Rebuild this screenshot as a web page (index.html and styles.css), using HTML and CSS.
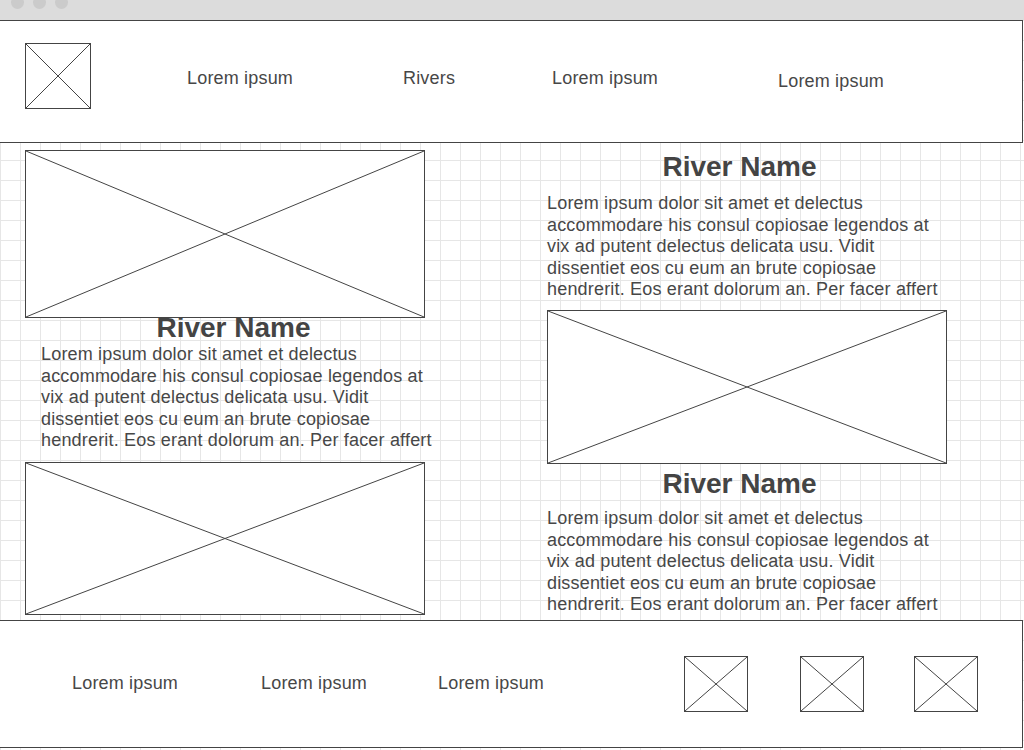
FILE: index.html
```html
<!DOCTYPE html>
<html lang="en">
  <head>
    <meta charset="UTF-8" />
    <meta name="viewport" content="width=device-width, initial-scale=1.0" />
    <title>Rivers</title>
    <link rel="stylesheet" href="styles.css">
  </head>
  <body>
    <div class="window-bar">
      <span class="dot"></span>
      <span class="dot"></span>
      <span class="dot"></span>
    </div>

    <header class="site-header">
      <div class="placeholder logo">
        <svg viewBox="0 0 100 100" preserveAspectRatio="none">
          <line x1="0" y1="0" x2="100" y2="100" />
          <line x1="100" y1="0" x2="0" y2="100" />
        </svg>
      </div>
      <nav class="nav">
        <a class="nav-link" href="#">Lorem ipsum</a>
        <a class="nav-link" href="#">Rivers</a>
        <a class="nav-link" href="#">Lorem ipsum</a>
        <a class="nav-link nav-link-last" href="#">Lorem ipsum</a>
      </nav>
    </header>

    <main class="rivers">
      <section class="column column-left">
        <div class="placeholder photo photo-top">
          <svg viewBox="0 0 100 100" preserveAspectRatio="none">
            <line x1="0" y1="0" x2="100" y2="100" />
            <line x1="100" y1="0" x2="0" y2="100" />
          </svg>
        </div>
        <div class="river-text">
          <h2>River Name</h2>
          <p>Lorem ipsum dolor sit amet et delectus accommodare his consul copiosae legendos at vix ad putent delectus delicata usu. Vidit dissentiet eos cu eum an brute copiosae hendrerit. Eos erant dolorum an. Per facer affert</p>
        </div>
        <div class="placeholder photo photo-bottom">
          <svg viewBox="0 0 100 100" preserveAspectRatio="none">
            <line x1="0" y1="0" x2="100" y2="100" />
            <line x1="100" y1="0" x2="0" y2="100" />
          </svg>
        </div>
      </section>

      <section class="column column-right">
        <div class="river-text">
          <h2>River Name</h2>
          <p>Lorem ipsum dolor sit amet et delectus accommodare his consul copiosae legendos at vix ad putent delectus delicata usu. Vidit dissentiet eos cu eum an brute copiosae hendrerit. Eos erant dolorum an. Per facer affert</p>
        </div>
        <div class="placeholder photo photo-middle">
          <svg viewBox="0 0 100 100" preserveAspectRatio="none">
            <line x1="0" y1="0" x2="100" y2="100" />
            <line x1="100" y1="0" x2="0" y2="100" />
          </svg>
        </div>
        <div class="river-text">
          <h2>River Name</h2>
          <p>Lorem ipsum dolor sit amet et delectus accommodare his consul copiosae legendos at vix ad putent delectus delicata usu. Vidit dissentiet eos cu eum an brute copiosae hendrerit. Eos erant dolorum an. Per facer affert</p>
        </div>
      </section>
    </main>

    <footer class="site-footer">
      <nav class="footer-nav">
        <a class="footer-link" href="#">Lorem ipsum</a>
        <a class="footer-link" href="#">Lorem ipsum</a>
        <a class="footer-link" href="#">Lorem ipsum</a>
      </nav>
      <div class="socials">
        <div class="placeholder social">
          <svg viewBox="0 0 100 100" preserveAspectRatio="none">
            <line x1="0" y1="0" x2="100" y2="100" />
            <line x1="100" y1="0" x2="0" y2="100" />
          </svg>
        </div>
        <div class="placeholder social">
          <svg viewBox="0 0 100 100" preserveAspectRatio="none">
            <line x1="0" y1="0" x2="100" y2="100" />
            <line x1="100" y1="0" x2="0" y2="100" />
          </svg>
        </div>
        <div class="placeholder social">
          <svg viewBox="0 0 100 100" preserveAspectRatio="none">
            <line x1="0" y1="0" x2="100" y2="100" />
            <line x1="100" y1="0" x2="0" y2="100" />
          </svg>
        </div>
      </div>
    </footer>
  </body>
</html>
```

FILE: styles.css
```css
body {
  font-family: "Liberation Sans", Arial, sans-serif;
  margin: 0;
  padding: 0;
  width: 1024px;
  height: 750px;
  overflow: hidden;
  color: #474747;
  letter-spacing: 0.18px;
  background-color: #fff;
  background-image:
    linear-gradient(to right, #e6e6e6 1px, transparent 1px),
    linear-gradient(to bottom, #e6e6e6 1px, transparent 1px);
  background-size: 20px 20px;
}

a {
  color: inherit;
  text-decoration: none;
}

/* browser chrome strip */
.window-bar {
  height: 20px;
  background-color: #dcdcdc;
  display: flex;
  gap: 9px;
  padding-left: 11px;
  overflow: hidden;
}

.dot {
  width: 13px;
  height: 13px;
  margin-top: -4px;
  border-radius: 50%;
  background-color: #cbcbcb;
}

/* placeholder boxes */
.placeholder {
  box-sizing: border-box;
  border: 1px solid #444;
  background: white;
}

.placeholder svg {
  display: block;
  width: 100%;
  height: 100%;
}

.placeholder line {
  stroke: #444;
  stroke-width: 1;
  vector-effect: non-scaling-stroke;
}

/* header */
.site-header {
  box-sizing: border-box;
  width: 1023px;
  height: 123px;
  border: 1px solid #444;
  border-left: none;
  background: white;
  display: flex;
  align-items: flex-start;
}

.logo {
  width: 66px;
  height: 66px;
  margin: 22px 0 0 25px;
}

.nav {
  display: flex;
  margin-left: 96px;
  margin-top: 47px;
}

.nav-link {
  font-size: 18px;
  line-height: 1.2;
}

.nav-link:nth-child(1) {
  width: 216px;
}

.nav-link:nth-child(2) {
  width: 149px;
}

.nav-link:nth-child(3) {
  width: 226px;
}

.nav-link-last {
  margin-top: 3px;
}

/* main content */
.rivers {
  display: flex;
  height: 477px;
  overflow: hidden;
}

.column {
  width: 400px;
  display: flex;
  flex-direction: column;
}

.column-left {
  margin-left: 25px;
}

.column-right {
  margin-left: 122px;
}

.photo {
  width: 400px;
}

.photo-top {
  height: 168px;
  margin-top: 7px;
}

.photo-bottom {
  height: 153px;
  margin-top: 10px;
}

.photo-middle {
  height: 154px;
  margin-top: 9px;
}

.river-text h2 {
  width: 385px;
  margin: 0;
  font-size: 28px;
  line-height: 28px;
  font-weight: bold;
  letter-spacing: 0;
  text-align: center;
  color: #444;
}

.river-text p {
  width: 396px;
  margin: 11px 0 0;
  font-size: 18px;
  line-height: 1.2;
}

.column-left .river-text {
  padding-left: 16px;
}

.column-left .river-text h2 {
  margin-top: -4px;
}

.column-left .river-text p {
  margin-top: 2px;
}

.column-right .river-text:first-child h2 {
  margin-top: 10px;
}

.column-right .river-text:first-child p {
  margin-top: 12px;
}

.column-right .photo + .river-text h2 {
  margin-top: 6px;
}

.column-right .photo + .river-text p {
  margin-top: 10px;
}

/* footer */
.site-footer {
  box-sizing: border-box;
  width: 1023px;
  height: 128px;
  border: 1px solid #444;
  border-left: none;
  background: white;
  display: flex;
  align-items: center;
}

.footer-nav {
  display: flex;
  margin-left: 72px;
}

.footer-link {
  font-size: 18px;
  line-height: 1.2;
}

.footer-link:nth-child(1) {
  width: 189px;
}

.footer-link:nth-child(2) {
  width: 177px;
}

.footer-link:nth-child(3) {
  width: 246px;
}

.socials {
  display: flex;
}

.social {
  width: 64px;
  height: 56px;
}

.social:nth-child(2) {
  margin-left: 52px;
}

.social:nth-child(3) {
  margin-left: 50px;
}
```
